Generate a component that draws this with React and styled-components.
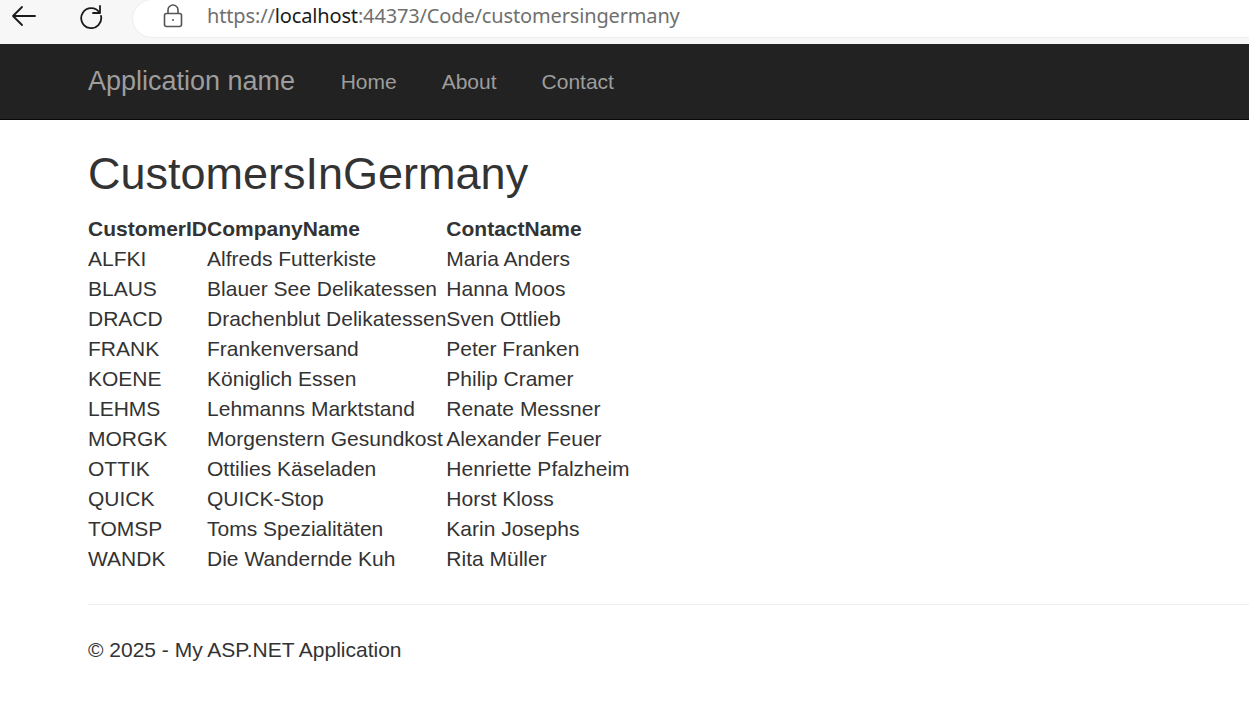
import React from 'react';
import styled, { createGlobalStyle } from 'styled-components';

const GlobalStyle = createGlobalStyle`
    body {
        margin: 0;
        background: #fff;
        font-family: "Liberation Sans", Arial, sans-serif;
        color: #333;
    }
`;

const Chrome = styled.div`
    display: flex;
    align-items: flex-start;
    height: 44px;
    background: #f7f7f7;
`;

const ChromeButton = styled.div`
    width: 48px;
    height: 32px;
    display: flex;
    align-items: center;
    justify-content: center;
    margin-left: ${p => p.offset}px;
    color: #1b1b1b;
`;

const UrlPill = styled.div`
    flex: 1;
    height: 37px;
    margin-left: 18px;
    background: #fff;
    border-radius: 20px 0 0 20px;
    box-shadow: 0 0 2px rgba(0, 0, 0, 0.12);
    display: flex;
    align-items: center;
    padding-left: 30px;
    gap: 24px;
`;

const UrlText = styled.span`
    font-family: "Noto Sans", "Open Sans", sans-serif;
    font-size: 20px;
    letter-spacing: -0.15px;
    color: #6f6f6f;
    margin-top: -6px;
    b {
        font-weight: 400;
        color: #1a1a1a;
    }
`;

const Navbar = styled.nav`
    height: 75px;
    background: #222;
    border-bottom: 1px solid #080808;
    display: flex;
    align-items: center;
    padding-left: 88px;
`;

const Brand = styled.a`
    font-size: 27px;
    color: #9d9d9d;
    margin-right: 23px;
    text-decoration: none;
`;

const NavLink = styled.a`
    font-size: 21px;
    color: #9d9d9d;
    padding: 0 22.5px;
    text-decoration: none;
`;

const Container = styled.main`
    padding: 0 0 0 88px;
`;

const Title = styled.h2`
    font-size: 45px;
    font-weight: 500;
    line-height: 1.1;
    margin: 29px 0 15px;
    color: #333;
`;

const Table = styled.table`
    border-collapse: collapse;
    border-spacing: 0;
    font-size: 21px;
    line-height: 30px;
    color: #333;
`;

const Cell = styled.td`
    padding: 0;
    text-align: left;
    white-space: nowrap;
    font-weight: ${p => (p.head ? 700 : 400)};
`;

const Rule = styled.hr`
    border: 0;
    border-top: 1px solid #eee;
    margin: 30px 0 30px 88px;
`;

const Footer = styled.footer`
    padding-left: 88px;
    font-size: 21px;
    line-height: 30px;
    color: #333;
`;

const customers = [
    ['ALFKI', 'Alfreds Futterkiste', 'Maria Anders'],
    ['BLAUS', 'Blauer See Delikatessen', 'Hanna Moos'],
    ['DRACD', 'Drachenblut Delikatessen', 'Sven Ottlieb'],
    ['FRANK', 'Frankenversand', 'Peter Franken'],
    ['KOENE', 'Königlich Essen', 'Philip Cramer'],
    ['LEHMS', 'Lehmanns Marktstand', 'Renate Messner'],
    ['MORGK', 'Morgenstern Gesundkost', 'Alexander Feuer'],
    ['OTTIK', 'Ottilies Käseladen', 'Henriette Pfalzheim'],
    ['QUICK', 'QUICK-Stop', 'Horst Kloss'],
    ['TOMSP', 'Toms Spezialitäten', 'Karin Josephs'],
    ['WANDK', 'Die Wandernde Kuh', 'Rita Müller'],
];

function App() {
    return (
        <>
            <GlobalStyle />
            <Chrome>
                <ChromeButton offset={0}>
                    <svg width="28" height="24" viewBox="0 0 28 24" fill="none" stroke="currentColor" strokeWidth="1.8" strokeLinecap="round" strokeLinejoin="round">
                        <path d="M25 12H3M12 3L3 12l9 9" />
                    </svg>
                </ChromeButton>
                <ChromeButton offset={19}>
                    <svg width="26" height="26" viewBox="0 0 26 26" fill="none" stroke="currentColor" strokeWidth="1.8" strokeLinecap="round" strokeLinejoin="round">
                        <path d="M21.5 9.5A10 10 0 1 0 23 13" />
                        <path d="M22 3v7h-7" />
                    </svg>
                </ChromeButton>
                <UrlPill>
                    <svg width="20" height="24" viewBox="0 0 20 24" fill="none" stroke="#555" strokeWidth="1.6" style={{ marginTop: -6 }}>
                        <rect x="1.5" y="9.5" width="17" height="13" rx="2" />
                        <path d="M5 9.5V6a5 5 0 0 1 10 0v3.5" />
                        <circle cx="10" cy="16" r="1" fill="#555" stroke="none" />
                    </svg>
                    <UrlText>https://<b>localhost</b>:44373/Code/customersingermany</UrlText>
                </UrlPill>
            </Chrome>
            <Navbar>
                <Brand href="#">Application name</Brand>
                <NavLink href="#">Home</NavLink>
                <NavLink href="#">About</NavLink>
                <NavLink href="#">Contact</NavLink>
            </Navbar>
            <Container>
                <Title>CustomersInGermany</Title>
                <Table>
                    <thead>
                        <tr>
                            <Cell as="th" head>CustomerID</Cell>
                            <Cell as="th" head>CompanyName</Cell>
                            <Cell as="th" head>ContactName</Cell>
                        </tr>
                    </thead>
                    <tbody>
                        {customers.map(([id, company, contact]) => (
                            <tr key={id}>
                                <Cell>{id}</Cell>
                                <Cell>{company}</Cell>
                                <Cell>{contact}</Cell>
                            </tr>
                        ))}
                    </tbody>
                </Table>
            </Container>
            <Rule />
            <Footer>© 2025 - My ASP.NET Application</Footer>
        </>
    );
}

export default App;
